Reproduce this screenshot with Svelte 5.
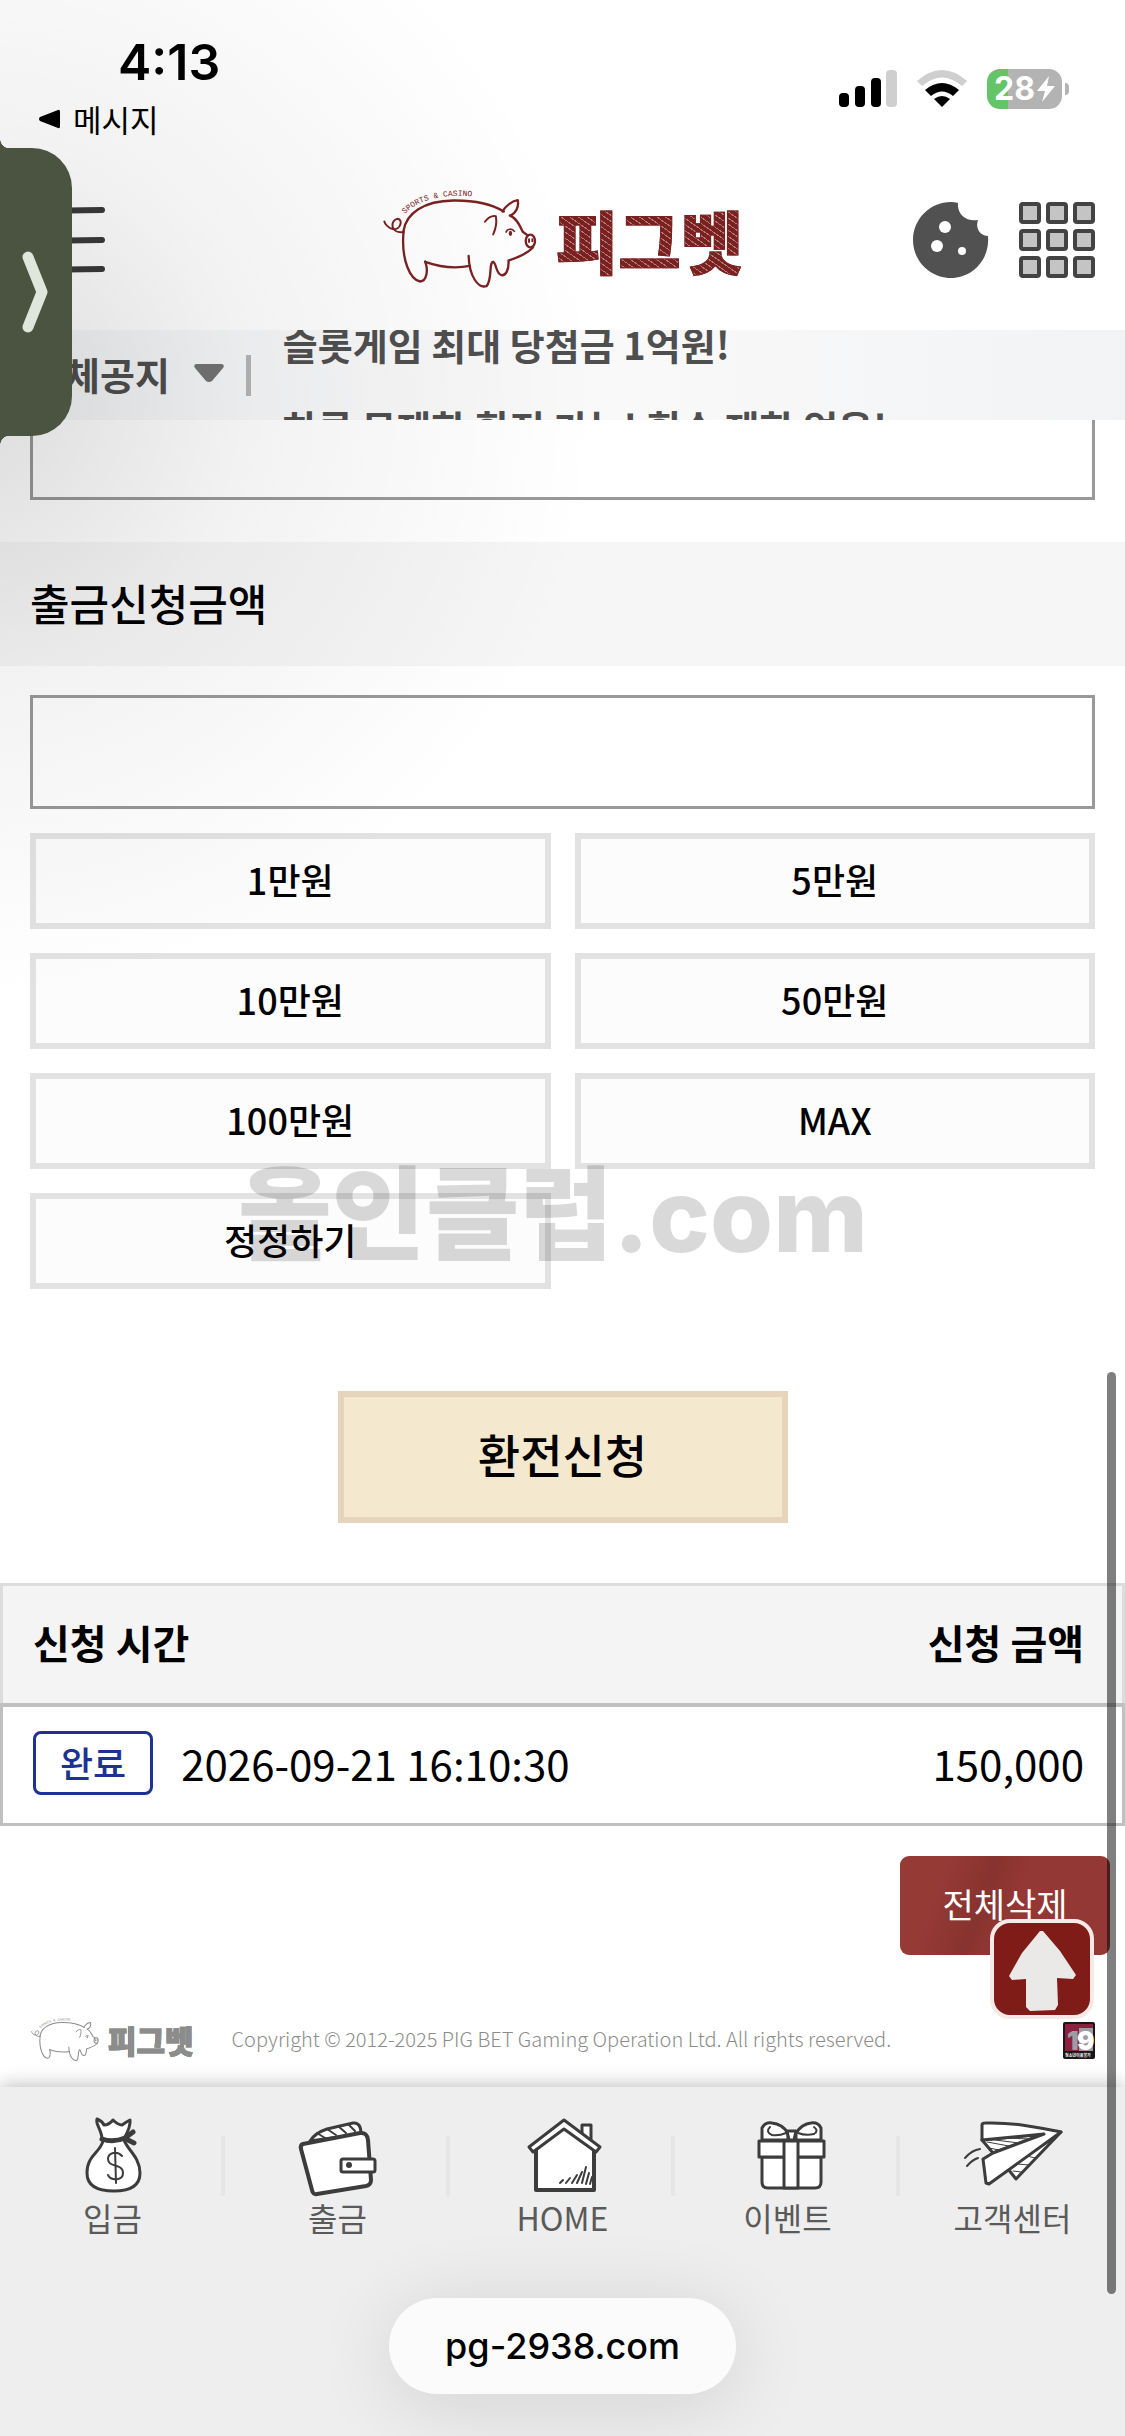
<script>
  let amount = $state('');
  let password = $state('');

  const presets = [
    { label: '1만원', value: 10000 },
    { label: '5만원', value: 50000 },
    { label: '10만원', value: 100000 },
    { label: '50만원', value: 500000 },
    { label: '100만원', value: 1000000 },
    { label: 'MAX', value: 5000000 },
    { label: '정정하기', value: 0 }
  ];

  const notices = ['슬롯게임 최대 당첨금 1억원!', '하루 무제한 환전 가능! 횟수 제한 없음!'];

  let requests = $state([
    { id: 1, status: '완료', time: '2026-09-21 16:10:30', amount: 150000 }
  ]);

  const menu = [
    { icon: 'bag', label: '입금' },
    { icon: 'wallet', label: '출금' },
    { icon: 'home', label: 'HOME' },
    { icon: 'gift', label: '이벤트' },
    { icon: 'plane', label: '고객센터' }
  ];

  function addAmount(preset) {
    if (preset.value === 0) {
      amount = '';
    } else if (preset.label === 'MAX') {
      amount = String(preset.value);
    } else {
      amount = String(Number(amount || 0) + preset.value);
    }
  }

  function clearRequests() {
    requests = [];
  }
</script>

{#snippet pig(curve)}
  <svg class="pig" viewBox="35 60 470 300" fill="none" stroke="currentColor" stroke-width="7" stroke-linecap="round" stroke-linejoin="round" aria-hidden="true">
    <path id={curve} d="M104 132 C150 82 240 66 350 84" stroke="none" />
    <text class="pig-text"><textPath href="#{curve}">SPORTS &amp; CASINO</textPath></text>
    <path d="M100 182 C108 130 160 92 250 91 C320 90 370 105 402 124" />
    <path d="M398 124 C408 106 428 92 444 90 C448 110 438 130 422 137" />
    <path d="M420 136 C440 144 450 165 459 185 L474 196" />
    <ellipse cx="482" cy="213" rx="14" ry="19" />
    <path d="M478 208 V216 M488 208 V214" stroke-width="6" />
    <path d="M490 232 C475 250 440 264 416 272 C418 300 408 318 395 316 C378 312 380 280 370 276 C356 278 368 330 350 349 C325 357 298 320 296 258" />
    <path d="M300 288 C260 296 210 292 165 276" />
    <path d="M165 275 C175 300 170 334 150 335 C120 330 92 270 100 184" />
    <path d="M100 186 C60 192 58 150 82 146 C100 148 90 182 68 177 C54 174 44 162 42 154" stroke-width="6" />
    <path d="M345 155 C355 142 368 136 378 138 C382 160 376 180 370 193" stroke-width="6" />
    <ellipse cx="422" cy="190" rx="5" ry="8" fill="currentColor" stroke="none" />
    <path d="M409 186 C412 175 428 175 434 184" stroke-width="5" />
  </svg>
{/snippet}

<div class="page">
  <div class="status-bar">
    <div class="status-left">
      <div class="clock">4:13</div>
      <a class="back-app" href="#messages">
        <svg width="23" height="20" viewBox="0 0 23 20" aria-hidden="true"><path d="M20 1 Q22 0 22 3 V17 Q22 20 20 19 L2 12 Q0 10 2 8 Z" /></svg>
        메시지
      </a>
    </div>
    <div class="status-right">
      <svg width="58" height="40" viewBox="0 0 58 40" aria-hidden="true">
        <rect x="0" y="24" width="10" height="14" rx="4" />
        <rect x="16" y="17" width="10" height="21" rx="4" />
        <rect x="32" y="9" width="10" height="29" rx="4" />
        <rect x="47" y="1" width="11" height="37" rx="4" fill="#cfcfcf" />
      </svg>
      <svg width="52" height="40" viewBox="0 0 52 40" aria-hidden="true">
        <path d="M1 12 Q26 -10 51 12 L46 17 Q26 0 6 17 Z" fill="#cfcfcf" />
        <path d="M9 21 Q26 7 43 21 L37 27 Q26 18 15 27 Z" />
        <path d="M18 30 Q26 24 34 30 L26 38 Z" />
      </svg>
      <div class="battery">
        <span>28</span>
        <svg width="18" height="26" viewBox="0 0 18 26" aria-hidden="true"><path d="M12 0 L0 15 H8 L5 26 L18 10 H10 Z" fill="#fff" /></svg>
      </div>
    </div>
  </div>

  <header class="header">
    <button class="icon-btn menu-btn" aria-label="menu">
      <svg width="75" height="66" viewBox="0 0 75 66" fill="none" stroke="#3a3a3a" stroke-width="6" stroke-linecap="round" aria-hidden="true">
        <path d="M3 4 L72 3 M3 34 L72 33 M3 63 L72 62" />
      </svg>
    </button>
    <a class="logo" href="#home">
      {@render pig('logo-curve')}
      <span class="logo-text">피그벳</span>
    </a>
    <div class="header-icons">
      <button class="icon-btn" aria-label="cookie">
        <svg width="76" height="76" viewBox="0 0 76 76" aria-hidden="true">
          <path d="M38 0 Q42 0 45 1 C44 12 53 20 65 18 C62 26 67 34 75 34 C77 58 59 76 38 76 C17 76 0 59 0 38 C0 17 17 0 38 0 Z" fill="#515151" />
          <circle cx="32" cy="25" r="6" fill="#fff" />
          <circle cx="24" cy="44" r="6" fill="#fff" />
          <circle cx="49" cy="49" r="4" fill="#fff" />
        </svg>
      </button>
      <button class="icon-btn" aria-label="all games">
        <svg width="76" height="76" viewBox="0 0 76 76" fill="#c4c4c4" stroke="#434343" stroke-width="4" aria-hidden="true">
          {#each [2, 29, 56] as y}
            {#each [2, 29, 56] as x}
              <rect {x} {y} width="18" height="18" rx="2" />
            {/each}
          {/each}
        </svg>
      </button>
    </div>
  </header>

  <div class="notice">
    <button class="notice-type">
      전체공지
      <svg width="30" height="20" viewBox="0 0 30 20" aria-hidden="true"><path d="M2 1 H28 Q31 2 29 5 L18 18 Q15 20 12 18 L1 5 Q-1 2 2 1 Z" fill="#747474" /></svg>
    </button>
    <span class="divider"></span>
    <div class="notice-list">
      {#each notices as notice}
        <p>{notice}</p>
      {/each}
    </div>
  </div>

  <main>
    <input class="field field-cut" type="password" aria-label="비밀번호" bind:value={password} />

    <label class="section-title" for="amount">출금신청금액</label>
    <div class="form">
      <input class="field" id="amount" type="text" inputmode="numeric" bind:value={amount} />
      <div class="presets">
        {#each presets as preset}
          <button class="preset" onclick={() => addAmount(preset)}>{preset.label}</button>
        {/each}
        <div class="watermark">올인클럽.com</div>
      </div>
    </div>

    <button class="submit">환전신청</button>

    <table class="history">
      <thead>
        <tr>
          <th>신청 시간</th>
          <th class="right">신청 금액</th>
        </tr>
      </thead>
      <tbody>
        {#each requests as request (request.id)}
          <tr>
            <td>
              <div class="time-cell">
                <span class="badge">{request.status}</span>
                <span>{request.time}</span>
              </div>
            </td>
            <td class="right">{request.amount.toLocaleString('en-US')}</td>
          </tr>
        {/each}
      </tbody>
    </table>

    <div class="actions">
      <button class="delete-all" onclick={clearRequests}>전체삭제</button>
      <button class="to-top" aria-label="top">
        <svg width="96" height="92" viewBox="0 0 96 92" aria-hidden="true">
          <path d="M46 8 L49 8 L66 28 L82 52 L79 56 L63 55 L64 82 L61 87 L36 88 L32 84 L32 56 L18 57 L15 53 L28 30 Z" fill="#ebe9e8" />
        </svg>
      </button>
    </div>
  </main>

  <footer class="footer">
    <div class="logo small">
      {@render pig('footer-curve')}
      <span class="logo-text">피그벳</span>
    </div>
    <p>Copyright © 2012-2025 PIG BET Gaming Operation Ltd. All rights reserved.</p>
    <svg width="32" height="37" viewBox="0 0 32 37" aria-label="19">
      <rect width="32" height="37" rx="2" fill="#1a1718" />
      <rect x="2" y="2" width="28" height="27" fill="#8f1f3f" />
      <rect x="16" y="6" width="14" height="23" fill="#9b9ea3" />
      <text x="4" y="28" class="age" fill="#9b9ea3">1</text>
      <text x="14" y="28" class="age" fill="#fff">9</text>
      <text x="2" y="35" class="age-note" fill="#fff">청소년이용불가</text>
    </svg>
  </footer>

  <nav class="bottom-nav">
    {#each menu as item}
      <a href="#{item.icon}">
        <svg width="80" height="80" viewBox="0 0 80 80" fill="#fff" stroke="#3c3c3c" stroke-width="3" stroke-linejoin="round" stroke-linecap="round" aria-hidden="true">
          {#if item.icon === 'bag'}
            <path d="M29 23 C29 14 22 8 24 3 Q29 5 31 9 Q36 9 40 4 Q45 9 49 9 Q53 6 57 4 Q58 10 51 23 C52 32 67 40 67 57 C67 70 56 75 41 75 C25 75 14 70 14 57 C14 39 27 37 30 25 Z" />
            <path d="M29 23 Q40 27 52 22 L60 16 M53 23 L61 27" fill="none" stroke-width="5" />
            <path d="M49 40 C44 34 35 37 35 43 C35 52 50 47 50 57 C50 65 38 65 35 59 M42 32 L43 67" fill="none" stroke-width="2" />
          {:else if item.icon === 'wallet'}
            <path d="M12 25 Q17 17 29 13 L55 7 Q63 6 63 18 Z" />
            <path d="M19 17 L27 22 M29 13 L38 19 M40 10 L48 17 M50 8 L57 15" stroke-width="2" />
            <path d="M5 28 L62 17 Q69 16 70 24 L73 64 Q73 69 68 70 L19 78 Q15 79 14 74 L3 33 Q2 29 5 28 Z" stroke-width="4" />
            <rect x="43" y="43" width="34" height="13" rx="2" />
            <circle cx="51" cy="49" r="3" fill="#3c3c3c" stroke="none" />
          {:else if item.icon === 'home'}
            <path d="M59 25 V9 H68 V32 Z" />
            <path d="M13 33 L41 10 L71 33 V74 H13 Z" stroke-width="4" />
            <path d="M41 4 L77 31 L73 36 L41 13 L10 36 L6 31 Z" />
            <path d="M37 67 L40 64 M43 67 L47 62 M49 67 L54 59 M54 67 L59 56 M59 67 L63 51 M63 68 L66 57 M67 68 L69 61" stroke-width="2" />
          {:else if item.icon === 'gift'}
            <path d="M14 24 V12 Q17 6 24 7 Q34 8 40 17 V24 Z M73 24 V12 Q70 6 63 7 Q54 8 48 17 V24 Z" />
            <path d="M22 11 Q17 16 24 19 Q31 20 38 17 M66 11 Q71 15 66 18 Q58 20 50 17" fill="none" stroke-width="2" />
            <path d="M14 41 H73 V66 Q73 72 67 72 H20 Q14 72 14 66 Z" />
            <rect x="11" y="25" width="65" height="16" />
            <rect x="36" y="25" width="14" height="47" />
            <path d="M39 15 H48 L46 24 H41 Z" />
          {:else}
            <path d="M9 24 L71 18 L20 37 Z M88 16 L43 63 L35 53 Z" />
            <path d="M14 26 L36 30 M22 24 L46 27 M34 22 L56 23 M16 32 L26 34 M40 55 L48 56 M44 48 L56 49 M54 40 L62 42" stroke-width="1" />
            <path d="M9 24 V9 Q9 7 12 7 C40 6 62 11 88 16 L16 68 L13 67 L10 43 L20 37 L71 18 Z" />
            <path d="M-8 42 Q-1 34 7 33 M-6 50 Q-1 44 5 42" fill="none" stroke-width="2" />
          {/if}
        </svg>
        <span>{item.label}</span>
      </a>
    {/each}
  </nav>

  <div class="address-bar">
    <button class="address">pg-2938.com</button>
  </div>

  <div class="shade"></div>

  <button class="drawer" aria-label="open drawer">
    <svg width="27" height="82" viewBox="0 0 27 82" fill="none" stroke="#dfe6dc" stroke-width="11" stroke-linecap="round" stroke-linejoin="round" aria-hidden="true">
      <path d="M6 6 L20 41 L6 76" />
    </svg>
  </button>
  <div class="scrollbar"></div>
</div>

<style>
  :global(body) {
    margin: 0;
    background: #fff;
  }

  .page {
    position: relative;
    min-height: 100vh;
    display: flex;
    flex-direction: column;
    overflow: hidden;
    font-family: 'Noto Sans CJK KR', sans-serif;
    color: #000;
    background: #fff;
  }

  .page * {
    box-sizing: border-box;
  }

  button,
  input {
    font-family: inherit;
    color: inherit;
    margin: 0;
  }

  a {
    color: inherit;
    text-decoration: none;
  }

  p {
    margin: 0;
  }

  .status-bar {
    display: flex;
    justify-content: space-between;
    height: 150px;
    padding: 32px 56px 0 38px;
  }

  .clock {
    padding-left: 80px;
    font: 600 50px/60px Inter, sans-serif;
  }

  .back-app {
    display: flex;
    align-items: center;
    gap: 12px;
    font-size: 31px;
    line-height: 54px;
  }

  .status-right {
    display: flex;
    align-items: center;
    gap: 19px;
    height: 40px;
    margin-top: 37px;
  }

  .battery {
    position: relative;
    display: flex;
    align-items: center;
    justify-content: center;
    gap: 2px;
    width: 75px;
    height: 40px;
    margin-right: 7px;
    border-radius: 13px;
    background: linear-gradient(90deg, #65c466 28%, #b3b3b3 28%);
    color: #fff;
    font: 700 32px/40px Inter, sans-serif;
  }

  .battery::after {
    content: '';
    position: absolute;
    right: -7px;
    top: 14px;
    width: 4px;
    height: 12px;
    border-radius: 0 4px 4px 0;
    background: #b3b3b3;
  }

  .header {
    display: grid;
    grid-template-columns: 1fr auto 1fr;
    align-items: center;
    height: 180px;
    padding: 0 30px;
  }

  .icon-btn {
    display: flex;
    padding: 0;
    border: none;
    background: none;
  }

  .header-icons {
    display: flex;
    justify-content: flex-end;
    gap: 30px;
  }

  .logo {
    display: flex;
    align-items: center;
    gap: 18px;
    color: #7a2222;
  }

  .pig {
    width: 156px;
    height: 100px;
  }

  .pig-text {
    font: 24px 'Liberation Mono', monospace;
    fill: currentColor;
    stroke: none;
  }

  .logo-text {
    font-size: 68px;
    font-weight: 900;
    line-height: 80px;
    color: transparent;
    background: repeating-linear-gradient(35deg, #7a2020 0 4px, #b07a74 4px 5px);
    background-clip: text;
    -webkit-text-stroke: 1px #7a2222;
  }

  .logo.small {
    gap: 8px;
    color: #8c8c8c;
  }

  .small .pig {
    width: 70px;
    height: 44px;
  }

  .small .logo-text {
    font-size: 31px;
    line-height: 40px;
    background: #8c8c8c;
    background-clip: text;
    -webkit-text-stroke: 1px #8c8c8c;
  }

  .notice {
    display: flex;
    align-items: center;
    height: 90px;
    padding-left: 30px;
    overflow: hidden;
    background: linear-gradient(90deg, #f6f7f8, #f9f9fa 55%, #f2f3f4);
    color: #4f4f4f;
    font-size: 38px;
    font-weight: 700;
  }

  .notice-type {
    display: flex;
    align-items: center;
    gap: 24px;
    padding: 0 0 4px;
    border: none;
    background: none;
    font-size: 38px;
    font-weight: 700;
  }

  .divider {
    width: 5px;
    height: 41px;
    margin: 0 32px 0 22px;
    background: #b5b5b5;
  }

  .notice-list {
    align-self: flex-start;
    margin-top: -28px;
    line-height: 83px;
  }

  main {
    display: flex;
    flex-direction: column;
  }

  .field {
    display: block;
    width: 100%;
    height: 114px;
    padding: 0 24px;
    border: 3px solid #999;
    border-radius: 0;
    background: #fff;
    font-size: 40px;
    outline: none;
  }

  .field-cut {
    width: auto;
    height: 80px;
    margin: 0 30px 42px;
    border-top: none;
  }

  .section-title {
    padding: 0 30px 4px;
    background: #f6f6f6;
    font-size: 43px;
    font-weight: 500;
    line-height: 120px;
  }

  .form {
    display: flex;
    flex-direction: column;
    gap: 24px;
    padding: 29px 30px 0;
  }

  .presets {
    position: relative;
    display: grid;
    grid-template-columns: 1fr 1fr;
    gap: 24px;
  }

  .preset {
    height: 96px;
    padding: 0 0 4px;
    border: 6px solid #e2e2e2;
    background: #fcfcfc;
    font-size: 36px;
    font-weight: 500;
  }

  .watermark {
    position: absolute;
    left: 208px;
    bottom: 14px;
    font: 800 102px/120px Inter, 'Noto Sans CJK KR', sans-serif;
    color: rgba(0, 0, 0, 0.15);
    pointer-events: none;
  }

  .submit {
    align-self: center;
    width: 450px;
    height: 132px;
    margin: 102px 0 60px;
    padding: 0 0 8px;
    border: 6px solid #e6d5bc;
    background: #f4e8ce;
    font-size: 46px;
    font-weight: 500;
  }

  .history {
    width: 100%;
    border-collapse: collapse;
    font-size: 42px;
  }

  .history th,
  .history td {
    height: 120px;
    padding: 0 30px 4px;
    text-align: left;
  }

  .history thead tr {
    background: #f4f4f4;
    border: 3px solid #dcdcdc;
  }

  .history tbody tr {
    border: 3px solid #c0c0c0;
    border-top-width: 4px;
  }

  .history th {
    font-size: 40px;
    font-weight: 700;
  }

  .history .right {
    padding-right: 38px;
    text-align: right;
  }

  .time-cell {
    display: flex;
    align-items: center;
    gap: 28px;
  }

  .badge {
    padding: 0 24px 2px;
    border: 3px solid #1c3391;
    border-radius: 8px;
    color: #1c3391;
    font-size: 36px;
    font-weight: 500;
    line-height: 56px;
  }

  .actions {
    position: relative;
    display: flex;
    justify-content: flex-end;
    padding: 30px 15px 52px;
  }

  .delete-all {
    width: 210px;
    height: 99px;
    padding: 0 0 4px;
    border: none;
    border-radius: 9px;
    background: linear-gradient(110deg, #963a36 20%, #87332f 40%, #943835 55%);
    color: #fff;
    font-size: 34px;
  }

  .to-top {
    position: absolute;
    right: 31px;
    top: 93px;
    width: 104px;
    height: 100px;
    padding: 0;
    border: 4px solid #f6e9e7;
    border-radius: 20px;
    background: #801c18;
  }

  .to-top svg {
    display: block;
  }

  .footer {
    display: flex;
    align-items: center;
    height: 80px;
    padding: 0 30px 14px;
    color: #8c8c8c;
  }

  .footer p {
    flex: 1;
    padding: 0 0 4px 38px;
    font-size: 20px;
    font-weight: 300;
  }

  .age {
    font: 900 26px Inter, sans-serif;
  }

  .age-note {
    font-size: 4px;
    font-weight: 700;
  }

  .bottom-nav {
    position: relative;
    display: flex;
    padding: 29px 0 40px;
    background: #eee;
    box-shadow: 0 -2px 18px rgba(0, 0, 0, 0.25);
  }

  .bottom-nav a {
    flex: 1;
    display: flex;
    flex-direction: column;
    align-items: center;
    color: #5a5a5a;
    font-size: 32px;
    line-height: 42px;
  }

  .bottom-nav a:not(:last-child) {
    background: linear-gradient(#e6e6e6, #e6e6e6) right 20px / 4px 60px no-repeat;
  }

  .bottom-nav svg {
    overflow: visible;
  }

  .address-bar {
    position: relative;
    flex: 1;
    display: flex;
    justify-content: center;
    padding: 20px 0 42px;
    background: #eee;
  }

  .address {
    height: 96px;
    padding: 0 56px;
    border: none;
    border-radius: 48px;
    background: #fbfbfb;
    box-shadow: 0 10px 80px rgba(0, 0, 0, 0.12);
    font: 500 36px Inter, sans-serif;
  }

  .shade {
    position: absolute;
    inset: 0 0 auto 0;
    height: 1000px;
    background: radial-gradient(ellipse 640px 600px at -40px 400px, rgba(0, 0, 0, 0.14), rgba(0, 0, 0, 0.05) 45%, transparent);
    pointer-events: none;
  }

  .drawer {
    position: absolute;
    left: 0;
    top: 148px;
    display: flex;
    align-items: center;
    width: 72px;
    height: 288px;
    padding: 0 0 0 22px;
    border: none;
    border-radius: 0 40px 40px 0;
    background: #4b5341;
  }

  /* small flares where the tab meets the screen edge */
  .drawer::before,
  .drawer::after {
    content: '';
    position: absolute;
    left: 0;
    width: 8px;
    height: 10px;
  }

  .drawer::before {
    bottom: 100%;
    background: radial-gradient(ellipse at 100% 0, transparent 68%, #4b5341 72%);
  }

  .drawer::after {
    top: 100%;
    background: radial-gradient(ellipse at 100% 100%, transparent 68%, #4b5341 72%);
  }

  .scrollbar {
    position: absolute;
    right: 9px;
    top: 1372px;
    width: 9px;
    height: 922px;
    border-radius: 5px;
    background: rgba(0, 0, 0, 0.5);
    pointer-events: none;
  }
</style>
